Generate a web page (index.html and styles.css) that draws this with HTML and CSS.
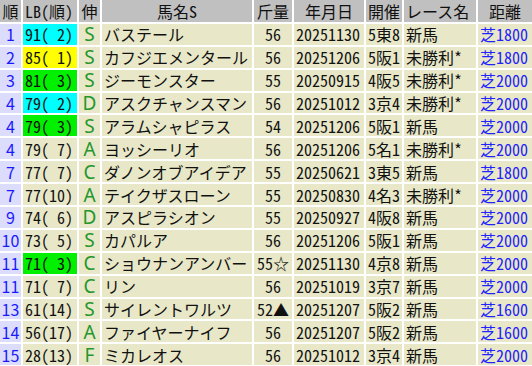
FILE: index.html
```html
<!DOCTYPE html>
<html lang="ja">
<head>
<meta charset="utf-8">
<link rel="stylesheet" href="styles.css">
</head>
<body>
<div class="grid">
  <div class="h c">順</div><div class="h l">LB(順)</div><div class="h c">伸</div><div class="h c">馬名S</div><div class="h c">斤量</div><div class="h c">年月日</div><div class="h l">開催</div><div class="h l">レース名</div><div class="h c">距離</div>

  <div class="rk">1</div><div class="lb cy">91( 2)</div><div class="nb">S</div><div class="d">バステール</div><div class="d c">56</div><div class="d">20251130</div><div class="d">5東8</div><div class="d">新馬</div><div class="d ds">芝1800</div>
  <div class="rk">2</div><div class="lb ye">85( 1)</div><div class="nb">S</div><div class="d">カフジエメンタール</div><div class="d c">56</div><div class="d">20251206</div><div class="d">5阪1</div><div class="d">未勝利*</div><div class="d ds">芝1800</div>
  <div class="rk">3</div><div class="lb gr">81( 3)</div><div class="nb">S</div><div class="d">ジーモンスター</div><div class="d c">55</div><div class="d">20250915</div><div class="d">4阪5</div><div class="d">未勝利*</div><div class="d ds">芝2000</div>
  <div class="rk">4</div><div class="lb cy">79( 2)</div><div class="nb">D</div><div class="d">アスクチャンスマン</div><div class="d c">56</div><div class="d">20251012</div><div class="d">3京4</div><div class="d">未勝利*</div><div class="d ds">芝2000</div>
  <div class="rk">4</div><div class="lb gr">79( 3)</div><div class="nb">S</div><div class="d">アラムシャピラス</div><div class="d c">54</div><div class="d">20251206</div><div class="d">5阪1</div><div class="d">新馬</div><div class="d ds">芝2000</div>
  <div class="rk">4</div><div class="lb">79( 7)</div><div class="nb">A</div><div class="d">ヨッシーリオ</div><div class="d c">56</div><div class="d">20251206</div><div class="d">5名1</div><div class="d">未勝利*</div><div class="d ds">芝2000</div>
  <div class="rk">7</div><div class="lb">77( 7)</div><div class="nb">C</div><div class="d">ダノンオブアイデア</div><div class="d c">55</div><div class="d">20250621</div><div class="d">3東5</div><div class="d">新馬</div><div class="d ds">芝1800</div>
  <div class="rk">7</div><div class="lb">77(10)</div><div class="nb">A</div><div class="d">テイクザスローン</div><div class="d c">55</div><div class="d">20250830</div><div class="d">4名3</div><div class="d">未勝利*</div><div class="d ds">芝2000</div>
  <div class="rk">9</div><div class="lb">74( 6)</div><div class="nb">D</div><div class="d">アスピラシオン</div><div class="d c">55</div><div class="d">20250927</div><div class="d">4阪8</div><div class="d">新馬</div><div class="d ds">芝2000</div>
  <div class="rk">10</div><div class="lb">73( 5)</div><div class="nb">S</div><div class="d">カパルア</div><div class="d c">56</div><div class="d">20251206</div><div class="d">5阪1</div><div class="d">新馬</div><div class="d ds">芝2000</div>
  <div class="rk">11</div><div class="lb gr">71( 3)</div><div class="nb">C</div><div class="d">ショウナンアンバー</div><div class="d c">55☆</div><div class="d">20251130</div><div class="d">4京8</div><div class="d">新馬</div><div class="d ds">芝2000</div>
  <div class="rk">11</div><div class="lb">71( 7)</div><div class="nb">C</div><div class="d">リン</div><div class="d c">56</div><div class="d">20251019</div><div class="d">3京7</div><div class="d">新馬</div><div class="d ds">芝2000</div>
  <div class="rk">13</div><div class="lb">61(14)</div><div class="nb">S</div><div class="d">サイレントワルツ</div><div class="d c">52▲</div><div class="d">20251207</div><div class="d">5阪2</div><div class="d">新馬</div><div class="d ds">芝1600</div>
  <div class="rk">14</div><div class="lb">56(17)</div><div class="nb">A</div><div class="d">ファイヤーナイフ</div><div class="d c">56</div><div class="d">20251207</div><div class="d">5阪2</div><div class="d">新馬</div><div class="d ds">芝1600</div>
  <div class="rk">15</div><div class="lb">28(13)</div><div class="nb">F</div><div class="d">ミカレオス</div><div class="d c">56</div><div class="d">20251012</div><div class="d">3京4</div><div class="d">新馬</div><div class="d ds">芝2000</div>
</div>
</body>
</html>
```
FILE: styles.css
```css
html, body {
  margin: 0;
  padding: 0;
  background: #ffffff;
}
body {
  font-family: "Noto Sans CJK JP", sans-serif;
  font-size: 16px;
  font-feature-settings: "hwid" 1;
  color: #111111;
  overflow: hidden;
}
.grid {
  display: grid;
  grid-template-columns: 21px 54px 21px 150px 38px 70px 36px 72px 54px;
  grid-auto-rows: 20.9px;
  gap: 2px;
  width: 532px;
  padding-top: 1px;
}
.grid > div {
  display: flex;
  align-items: center;
  white-space: nowrap;
  line-height: 20px;
  padding: 0 0 0 2px;
}
.h {
  background: #c0c0c0;
  margin-top: -1px;
}
.c {
  justify-content: center;
  padding: 0 !important;
}
.l {
  justify-content: flex-start;
}
.rk {
  background: #dcdcfc;
  color: #1a1aff;
  justify-content: center;
  padding: 0 !important;
  font-feature-settings: normal;
}
.lb {
  background: #e8e8c8;
}
.cy { background: #00ffff; }
.ye { background: #ffff00; }
.gr { background: #00f000; }
.grid > .nb {
  background: #e8e8c8;
  color: #23962c;
  justify-content: center;
  padding: 0;
  font-family: "Noto Sans", sans-serif;
  font-feature-settings: normal;
  font-size: 19px;
  line-height: 20px;
}
.d {
  background: #e8e8c8;
}
.ds {
  color: #2222ff;
}
```
